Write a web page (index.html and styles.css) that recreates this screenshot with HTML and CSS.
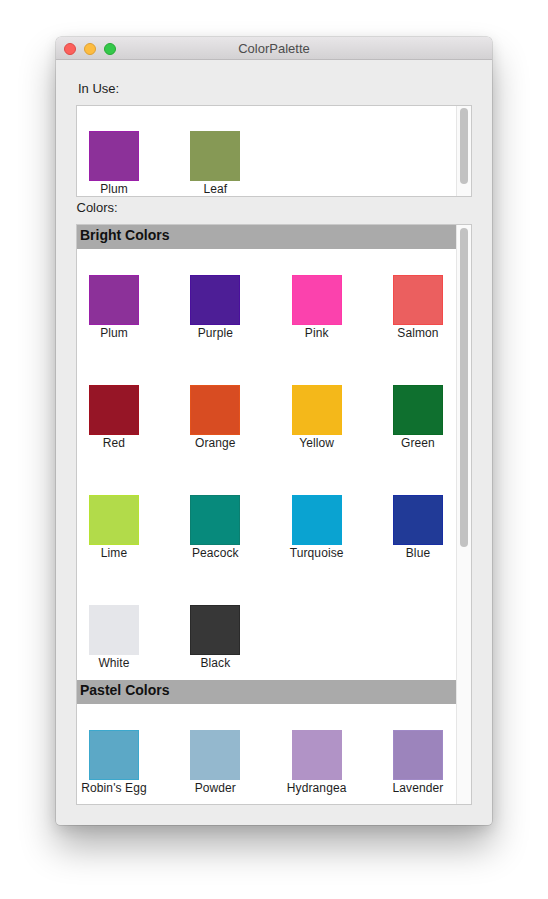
FILE: index.html
```html
<!DOCTYPE html>
<html>
<head>
<meta charset="utf-8">
<title>ColorPalette</title>
<link rel="stylesheet" href="styles.css">
</head>
<body>
<div class="window">
  <div class="titlebar">
    <div class="lights">
      <span class="light red"></span>
      <span class="light yellow"></span>
      <span class="light green"></span>
    </div>
    <div class="title">ColorPalette</div>
    <div></div>
  </div>
  <div class="content">
    <div class="label in-use-label">In Use:</div>
    <div class="box in-use-box">
      <div class="scroll-area">
        <div class="grid in-use-grid">
          <div class="item"><div class="swatch c-plum"></div><div class="name">Plum</div></div>
          <div class="item"><div class="swatch c-leaf"></div><div class="name">Leaf</div></div>
        </div>
      </div>
      <div class="track"><div class="thumb thumb-small"></div></div>
    </div>
    <div class="label colors-label">Colors:</div>
    <div class="box colors-box">
      <div class="scroll-area">
        <div class="section-header">Bright Colors</div>
        <div class="grid">
          <div class="item"><div class="swatch c-plum"></div><div class="name">Plum</div></div>
          <div class="item"><div class="swatch c-purple"></div><div class="name">Purple</div></div>
          <div class="item"><div class="swatch c-pink"></div><div class="name">Pink</div></div>
          <div class="item"><div class="swatch c-salmon"></div><div class="name">Salmon</div></div>
          <div class="item"><div class="swatch c-red"></div><div class="name">Red</div></div>
          <div class="item"><div class="swatch c-orange"></div><div class="name">Orange</div></div>
          <div class="item"><div class="swatch c-yellow"></div><div class="name">Yellow</div></div>
          <div class="item"><div class="swatch c-green"></div><div class="name">Green</div></div>
          <div class="item"><div class="swatch c-lime"></div><div class="name">Lime</div></div>
          <div class="item"><div class="swatch c-peacock"></div><div class="name">Peacock</div></div>
          <div class="item"><div class="swatch c-turquoise"></div><div class="name">Turquoise</div></div>
          <div class="item"><div class="swatch c-blue"></div><div class="name">Blue</div></div>
          <div class="item"><div class="swatch c-white"></div><div class="name">White</div></div>
          <div class="item"><div class="swatch c-black"></div><div class="name">Black</div></div>
        </div>
        <div class="section-header">Pastel Colors</div>
        <div class="grid">
          <div class="item"><div class="swatch c-robin"></div><div class="name">Robin's Egg</div></div>
          <div class="item"><div class="swatch c-powder"></div><div class="name">Powder</div></div>
          <div class="item"><div class="swatch c-hydrangea"></div><div class="name">Hydrangea</div></div>
          <div class="item"><div class="swatch c-lavender"></div><div class="name">Lavender</div></div>
        </div>
      </div>
      <div class="track"><div class="thumb thumb-large"></div></div>
    </div>
  </div>
</div>
</body>
</html>
```
FILE: styles.css
```css
html, body {
  margin: 0;
  padding: 0;
  background: #ffffff;
}
body {
  box-sizing: border-box;
  height: 899px;
  padding: 37px 56px 0 56px;
  font-family: "Liberation Sans", Arial, sans-serif;
  color: #1b1b1b;
}
.window {
  width: 436px;
  height: 788px;
  box-sizing: border-box;
  background: #ececec;
  border-radius: 5px 5px 4px 4px;
  box-shadow: 0 0 0 0.5px rgba(0,0,0,0.22), 0 22px 36px rgba(0,0,0,0.30), 0 4px 14px rgba(0,0,0,0.12);
  overflow: hidden;
  display: flex;
  flex-direction: column;
}
.titlebar {
  height: 22px;
  flex: none;
  border-bottom: 1px solid #bdbbbd;
  background: linear-gradient(#e8e6e8, #d3d1d3);
  display: grid;
  grid-template-columns: 1fr auto 1fr;
  align-items: center;
}
.lights {
  display: flex;
  gap: 8px;
  padding-left: 8px;
  padding-top: 1px;
}
.light {
  width: 12px;
  height: 12px;
  box-sizing: border-box;
  border-radius: 50%;
}
.red { background: #fc605c; border: 0.5px solid #de4a46; }
.yellow { background: #fdbc40; border: 0.5px solid #dea034; }
.green { background: #34c84a; border: 0.5px solid #27aa35; }
.title {
  font-size: 13px;
  color: #4c4c4c;
  line-height: 16px;
  padding-top: 1px;
}
.content {
  padding: 21px 20px 20px 20px;
  display: flex;
  flex-direction: column;
}
.label {
  font-size: 13px;
  line-height: 16px;
  color: #1d1d1d;
}
.in-use-label { padding-left: 2px; }
.colors-label { margin-top: 3px; padding-left: 0.5px; }
.box {
  margin-top: 8px;
  border: 1px solid #c9c9c9;
  background: #ffffff;
  display: flex;
  overflow: hidden;
}
.in-use-box { height: 90px; }
.colors-box { height: 579px; }
.scroll-area {
  flex: 1;
  overflow: hidden;
}
.track {
  flex: none;
  border-left: 1px solid #e6e6e6;
  background: #fafafa;
  padding: 3px 3px 0 3px;
  box-sizing: border-box;
  width: 15px;
}
.thumb {
  width: 8px;
  background: #c2c2c2;
  border-radius: 4px;
}
.thumb-small { margin-top: -1px; height: 76px; }
.thumb-large { height: 319px; }
.section-header {
  height: 24px;
  box-sizing: border-box;
  background: #aaaaaa;
  font-weight: bold;
  font-size: 14px;
  line-height: 20px;
  padding-left: 3px;
  color: #111111;
}
.grid {
  display: grid;
  grid-template-columns: repeat(4, 74px);
  column-gap: 27.33px;
  row-gap: 44px;
  padding: 26px 0 9px 0;
}
.in-use-grid { padding-top: 25px; }
.item {
  display: flex;
  flex-direction: column;
  align-items: center;
}
.swatch {
  width: 50px;
  height: 50px;
  box-sizing: border-box;
  border: 1px solid transparent;
}
.name {
  font-size: 12px;
  line-height: 16px;
  color: #1e1e1e;
  white-space: nowrap;
  letter-spacing: 0.1px;
}
.c-plum { background: #8c3199; border-color: #9a1fa9; }
.c-leaf { background: #869955; border-color: #869955; }
.c-purple { background: #4d1e96; border-color: #4a109c; }
.c-pink { background: #fb42ad; border-color: #ff3aa8; }
.c-salmon { background: #eb5f5f; border-color: #f34a4a; }
.c-red { background: #961526; border-color: #a2101f; }
.c-orange { background: #d84c22; border-color: #e4521b; }
.c-yellow { background: #f4b81a; border-color: #f7b812; }
.c-green { background: #0f702f; border-color: #0a6a26; }
.c-lime { background: #b2db4a; border-color: #b6e233; }
.c-peacock { background: #078a7c; border-color: #0b7f70; }
.c-turquoise { background: #0aa3d1; border-color: #06a4d6; }
.c-blue { background: #213a97; border-color: #182ea3; }
.c-white { background: #e5e6ea; border-color: #e5e6ea; }
.c-black { background: #373737; border-color: #2a2a2a; }
.c-robin { background: #5ca8c6; border-color: #3ca8cd; }
.c-powder { background: #94b8ce; border-color: #94b8ce; }
.c-hydrangea { background: #b193c6; border-color: #b193c6; }
.c-lavender { background: #9c84bc; border-color: #a089c6; }
```
